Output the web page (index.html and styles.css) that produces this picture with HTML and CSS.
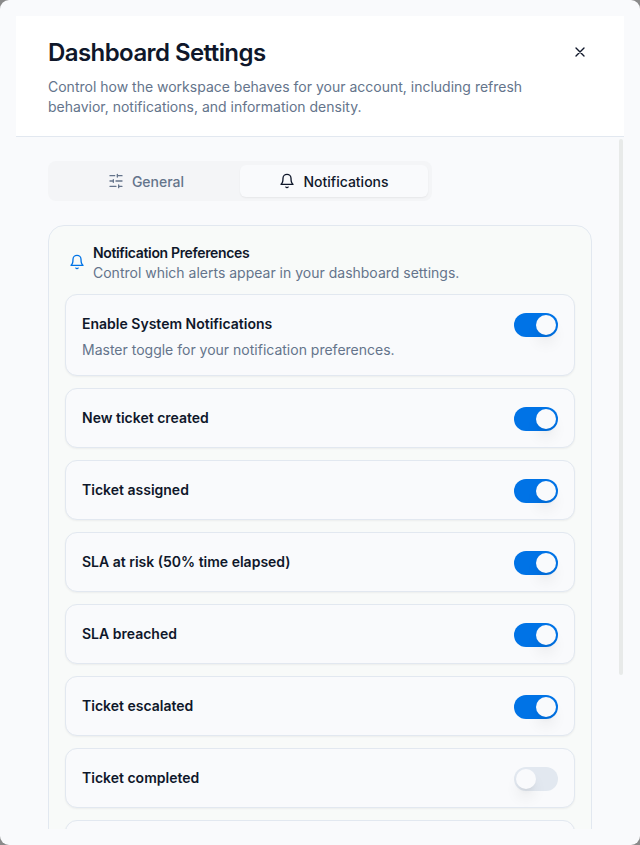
FILE: index.html
```html
<!DOCTYPE html>
<html lang="en">
<head>
    <meta charset="UTF-8">
    <meta name="viewport" content="width=device-width, initial-scale=1.0">
    <title>Dashboard Settings</title>
    <link rel="stylesheet" href="styles.css">
</head>
<body>
    <div class="dialog">
        <div class="header">
            <div class="header-text">
                <h1>Dashboard Settings</h1>
                <p>Control how the workspace behaves for your account, including refresh behavior, notifications, and information density.</p>
            </div>
            <button class="close-btn" aria-label="Close">
                <svg class="icon" viewBox="0 0 24 24"><path d="M18 6 6 18M6 6l12 12"/></svg>
            </button>
        </div>

        <div class="content">
            <div class="tabs">
                <button class="tab">
                    <svg class="icon" viewBox="0 0 24 24"><path d="M21 4h-7M10 4H3M21 12h-9M8 12H3M21 20h-5M12 20H3M14 2v4M8 10v4M16 18v4"/></svg>
                    <span>General</span>
                </button>
                <button class="tab active">
                    <svg class="icon" viewBox="0 0 24 24"><path d="M6 8a6 6 0 0 1 12 0c0 7 3 9 3 9H3s3-2 3-9M10.3 21a1.94 1.94 0 0 0 3.4 0"/></svg>
                    <span>Notifications</span>
                </button>
            </div>

            <div class="panel">
                <div class="panel-header">
                    <svg class="icon" viewBox="0 0 24 24"><path d="M6 8a6 6 0 0 1 12 0c0 7 3 9 3 9H3s3-2 3-9M10.3 21a1.94 1.94 0 0 0 3.4 0"/></svg>
                    <div>
                        <h2>Notification Preferences</h2>
                        <p>Control which alerts appear in your dashboard settings.</p>
                    </div>
                </div>

                <div class="setting">
                    <div>
                        <h3>Enable System Notifications</h3>
                        <p>Master toggle for your notification preferences.</p>
                    </div>
                    <button class="switch on" role="switch" aria-checked="true"></button>
                </div>
                <div class="setting">
                    <h3>New ticket created</h3>
                    <button class="switch on" role="switch" aria-checked="true"></button>
                </div>
                <div class="setting">
                    <h3>Ticket assigned</h3>
                    <button class="switch on" role="switch" aria-checked="true"></button>
                </div>
                <div class="setting">
                    <h3>SLA at risk (50% time elapsed)</h3>
                    <button class="switch on" role="switch" aria-checked="true"></button>
                </div>
                <div class="setting">
                    <h3>SLA breached</h3>
                    <button class="switch on" role="switch" aria-checked="true"></button>
                </div>
                <div class="setting">
                    <h3>Ticket escalated</h3>
                    <button class="switch on" role="switch" aria-checked="true"></button>
                </div>
                <div class="setting">
                    <h3>Ticket completed</h3>
                    <button class="switch" role="switch" aria-checked="false"></button>
                </div>
                <div class="setting"></div>
            </div>
            <div class="scrollbar"></div>
        </div>
    </div>
</body>
</html>
```
FILE: styles.css
```css
* {
    box-sizing: border-box;
}
body {
    margin: 0;
    background-color: #8a8a8a;
    font-family: Inter, sans-serif;
    font-size: 14px;
    line-height: 20px;
    color: #0f172a;
}
h1, h2, h3, p {
    margin: 0;
}
button {
    border: none;
    padding: 0;
    background: none;
    font: inherit;
    color: inherit;
    cursor: pointer;
}
.icon {
    width: 16px;
    height: 16px;
    flex-shrink: 0;
    fill: none;
    stroke: currentColor;
    stroke-width: 2;
    stroke-linecap: round;
    stroke-linejoin: round;
}
.dialog {
    display: flex;
    flex-direction: column;
    height: 845px;
    padding: 16px;
    border-radius: 9px;
    background-color: #f9fafc;
    overflow: hidden;
}
.header {
    display: flex;
    justify-content: space-between;
    align-items: flex-start;
    flex-shrink: 0;
    height: 121px;
    padding: 21px 32px 0;
    background-color: #fff;
    border-bottom: 1px solid #e2e8f0;
}
.header-text {
    width: 500px;
}
h1 {
    font-size: 24px;
    line-height: 32px;
    font-weight: 600;
    letter-spacing: -0.57px;
    margin-bottom: 8px;
}
p {
    color: #64748b;
}
.close-btn {
    display: flex;
    margin: 7px 4px 0 0;
}
.content {
    position: relative;
    flex: 1;
    min-height: 0;
    padding: 24px 32px 0;
    overflow: hidden;
}
.tabs {
    display: grid;
    grid-template-columns: 1fr 1fr;
    width: 384px;
    height: 40px;
    padding: 4px;
    margin-bottom: 24px;
    border-radius: 8px;
    background-color: #f4f5f7;
}
.tab {
    display: flex;
    justify-content: center;
    align-items: center;
    gap: 8px;
    border-radius: 6px;
    font-weight: 500;
    color: #64748b;
}
.tab span {
    padding-top: 2px;
}
.tab.active {
    color: #0f172a;
    background-color: #f9fafc;
    box-shadow: 0 1px 2px rgba(0, 0, 0, 0.06);
}
.panel {
    display: flex;
    flex-direction: column;
    gap: 12px;
    padding: 16px;
    border: 1px solid #e2e8f0;
    border-radius: 16px;
    background-color: #f8faf9;
}
.panel-header {
    display: flex;
    align-items: center;
    gap: 8px;
    padding: 1px 4px 0;
    margin-bottom: -1px;
}
.panel-header .icon {
    margin-bottom: 2px;
    color: #0073e6;
}
h2 {
    font-size: 14px;
    line-height: 20px;
    font-weight: 600;
    letter-spacing: -0.35px;
}
.setting {
    display: flex;
    justify-content: space-between;
    align-items: flex-start;
    min-height: 60px;
    padding: 16px;
    border: 1px solid #e2e8f0;
    border-radius: 12px;
    background-color: #f9fafc;
    box-shadow: 0 1px 2px rgba(0, 0, 0, 0.05);
}
h3 {
    margin-top: 3px;
    font-size: 14px;
    line-height: 20px;
    font-weight: 600;
}
.setting p {
    margin: 6px 0 -1px;
}
.switch {
    display: flex;
    width: 44px;
    height: 24px;
    margin-top: 2px;
    padding: 2px;
    border-radius: 12px;
    background-color: #e2e8f0;
}
.switch.on {
    justify-content: flex-end;
    background-color: #0073e6;
}
.switch::before {
    content: "";
    width: 20px;
    height: 20px;
    border-radius: 50%;
    background-color: #f9fafc;
    box-shadow: 0 10px 15px -3px rgba(0, 0, 0, 0.1), 0 4px 6px -4px rgba(0, 0, 0, 0.1);
}
.scrollbar {
    position: absolute;
    top: 2px;
    right: 1px;
    width: 4px;
    height: 536px;
    border-radius: 2px;
    background-color: #e8eae9;
}
```
